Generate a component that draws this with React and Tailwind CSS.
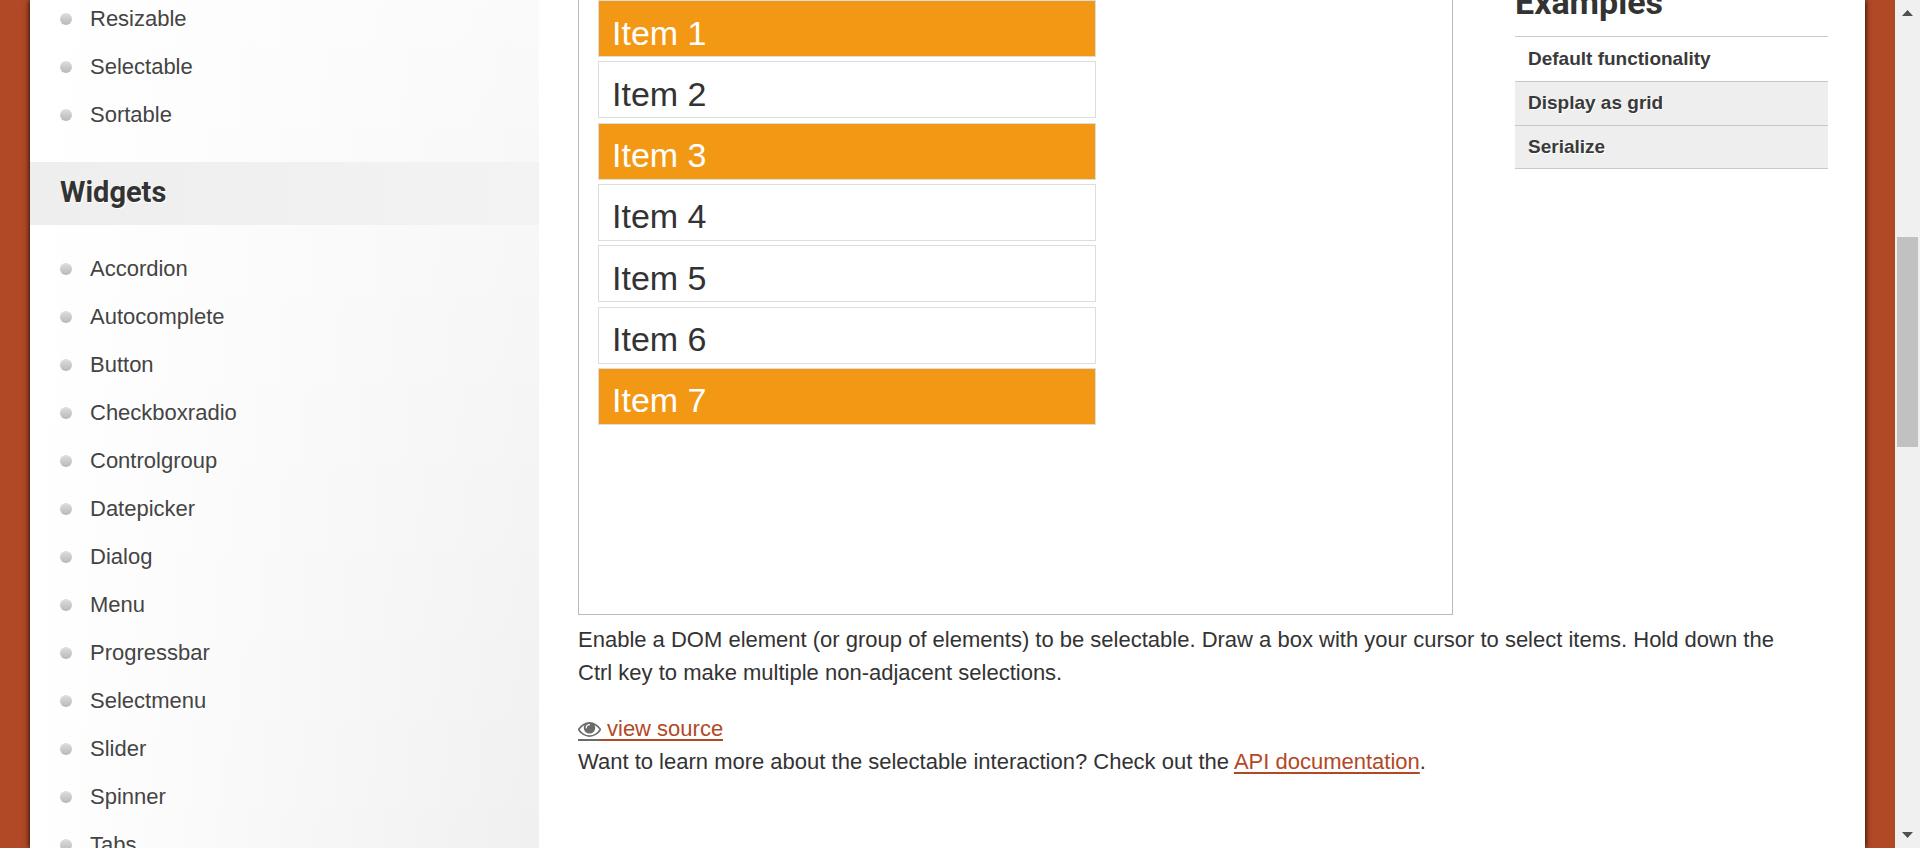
const interactions = ["Resizable", "Selectable", "Sortable"];
const widgets = [
  "Accordion", "Autocomplete", "Button", "Checkboxradio", "Controlgroup", "Datepicker",
  "Dialog", "Menu", "Progressbar", "Selectmenu", "Slider", "Spinner", "Tabs", "Tooltip",
];
const items = [
  { label: "Item 1", selected: true },
  { label: "Item 2", selected: false },
  { label: "Item 3", selected: true },
  { label: "Item 4", selected: false },
  { label: "Item 5", selected: false },
  { label: "Item 6", selected: false },
  { label: "Item 7", selected: true },
];

function NavList({ names }) {
  return (
    <ul className="pl-[30px]">
      {names.map((name) => (
        <li key={name} className="flex h-12 items-center gap-[18px]">
          <span className="size-3 rounded-full bg-linear-to-b from-[#dedede] to-[#b8b8b8]" />
          <a href="#" className="text-[22px] leading-8 text-[#444] text-shadow-[1px_1px_0_#fff]">{name}</a>
        </li>
      ))}
    </ul>
  );
}

function EyeIcon() {
  return (
    <svg viewBox="0 384 1792 1152" className="mt-[10px] h-[15px] w-[23px]" fill="#6b6b6b" aria-hidden="true">
      <path d="M1664 960q-152-236-381-353 61 104 61 225 0 185-131.5 316.5t-316.5 131.5-316.5-131.5-131.5-316.5q0-121 61-225-229 117-381 353 133 205 333.5 326.5t434.5 121.5 434.5-121.5 333.5-326.5zm-720-384q0-20-14-34t-34-14q-125 0-214.5 89.5t-89.5 214.5q0 20 14 34t34 14 34-14 14-34q0-86 61-147t147-61q20 0 34-14t14-34zm848 384q0 34-20 69-140 230-376.5 368.5t-499.5 138.5-499.5-139-376.5-368q-20-35-20-69t20-69q140-229 376.5-368t499.5-139 499.5 139 376.5 368q20 35 20 69z" />
    </svg>
  );
}

function Scrollbar() {
  return (
    <div className="flex w-[25px] shrink-0 flex-col items-center bg-[#f0f0f0]">
      <button aria-label="Scroll up" className="flex h-[26px] w-full items-center justify-center">
        <svg width="11" height="6" viewBox="0 0 11 6" fill="#505050"><path d="M5.5 0 11 6H0z" /></svg>
      </button>
      <div className="flex w-full flex-1 flex-col items-center">
        <div className="basis-[211px]" />
        <div className="h-[210px] w-[21px] bg-[#c1c1c1]" />
      </div>
      <button aria-label="Scroll down" className="flex h-[26px] w-full items-center justify-center">
        <svg width="11" height="6" viewBox="0 0 11 6" fill="#505050"><path d="M0 0h11L5.5 6z" /></svg>
      </button>
    </div>
  );
}

export default function App() {
  return (
    <div className="flex h-screen overflow-hidden bg-[#b24926] font-['Liberation_Sans',Arial,sans-serif] text-[#333]">
      <div className="flex min-w-0 flex-1 overflow-hidden px-[30px]">
        <div className="flex min-w-0 flex-1 bg-white shadow-[0_0_6px_#000]">
          <aside className="w-[509px] shrink-0 overflow-hidden bg-[linear-gradient(to_right,#fff,transparent),linear-gradient(to_bottom,#fafafa,#f0f0f0)]">
            <div className="-mt-[5px]">
              <NavList names={interactions} />
              <h3 className="mt-[23px] mb-5 flex h-[63px] items-center bg-linear-to-r from-[#eee] to-[#f3f3f3] pb-[2px] pl-[30px] font-[Roboto,sans-serif] text-[29px] font-bold text-shadow-[1px_1px_0_#fff]">
                Widgets
              </h3>
              <NavList names={widgets} />
            </div>
          </aside>

          <main className="min-w-0 flex-1 overflow-hidden pr-[37px] pl-[39px]">
            <div className="flex gap-[62px]">
              <section className="h-[615px] min-w-0 flex-1 border border-t-0 border-[#bbb] pl-[19px]">
                <ol className="flex h-[425px] w-[498px] flex-col justify-between">
                  {items.map(({ label, selected }) => (
                    <li
                      key={label}
                      className={
                        "flex h-[57px] items-center border border-[#ddd] pt-2 pl-[13px] text-[34px] leading-10 " +
                        (selected ? "bg-[#f39814] text-white" : "bg-white")
                      }
                    >
                      {label}
                    </li>
                  ))}
                </ol>
              </section>
              <nav className="w-[313px]">
                <h2 className="-mt-[18px] mb-[14px] font-[Roboto,sans-serif] text-[34px] leading-10 font-bold">Examples</h2>
                <ul className="divide-y divide-[#c8c8c8] border-y border-[#c8c8c8] text-[19px] font-bold text-[#3a3a3a]">
                  <li><a href="#" className="flex h-11 items-center px-[13px]">Default functionality</a></li>
                  <li><a href="#" className="flex h-[43px] items-center bg-[#eee] px-[13px] text-shadow-[1px_1px_0_#fff]">Display as grid</a></li>
                  <li><a href="#" className="flex h-[42px] items-center bg-[#eee] px-[13px] text-shadow-[1px_1px_0_#fff]">Serialize</a></li>
                </ul>
              </nav>
            </div>
            <div className="mt-2 pr-5 text-[22px] leading-[33px]">
              <p>
                Enable a DOM element (or group of elements) to be selectable. Draw a box with your cursor to select
                items. Hold down the Ctrl key to make multiple non-adjacent selections.
              </p>
              <p className="mt-[23px] flex h-[33px] items-start">
                <a href="#" className="flex h-[29px] text-[#b24926]">
                  <span className="border-b-2 border-[#6b6b6b]"><EyeIcon /></span>
                  <span className="border-b-2 border-[#b24926] pl-[6px]">view source</span>
                </a>
              </p>
              <p>
                Want to learn more about the selectable interaction? Check out the{" "}
                <a href="#" className="text-[#b24926] underline decoration-2 underline-offset-3">API documentation</a>.
              </p>
            </div>
          </main>
        </div>
      </div>
      <Scrollbar />
    </div>
  );
}
